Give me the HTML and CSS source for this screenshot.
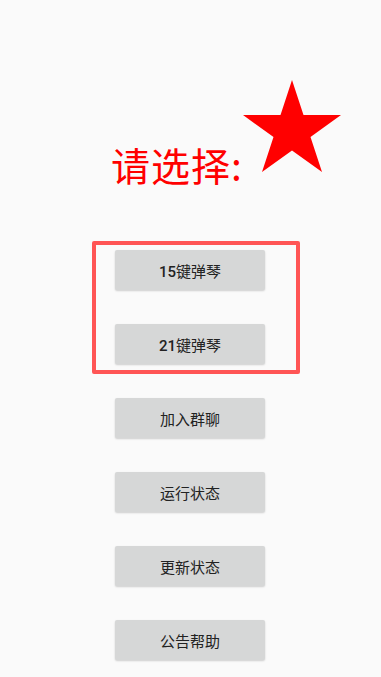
FILE: index.html
```html
<!DOCTYPE html>
<html lang="zh">
<head>
<meta charset="utf-8">
<title>请选择</title>
<link rel="stylesheet" href="styles.css">
</head>
<body>
<div class="page">
  <div class="header">
    <h1 class="title">请选择:</h1>
    <svg class="star" viewBox="243 80 98 92" width="98" height="92" aria-hidden="true">
      <polygon points="292,80 303.5,115 341,115 310.5,137 322,172 292,150.5 262,172 273.5,137 243,115 280.5,115" fill="#ff0000"/>
    </svg>
  </div>
  <div class="menu">
    <div class="group">
      <button class="btn"><span class="num">15</span>键弹琴</button>
      <button class="btn"><span class="num">21</span>键弹琴</button>
    </div>
    <button class="btn btn-out">加入群聊</button>
    <button class="btn btn-out">运行状态</button>
    <button class="btn btn-out">更新状态</button>
    <button class="btn btn-out">公告帮助</button>
  </div>
</div>
</body>
</html>
```

FILE: styles.css
```css
html, body {
  margin: 0;
  padding: 0;
  background: #fafafa;
}
body {
  font-family: Roboto, "Noto Sans CJK SC", sans-serif;
  height: 677px;
  overflow: hidden;
}
.page {
  display: flex;
  flex-direction: column;
}
.header {
  display: flex;
  align-items: flex-start;
  padding: 80px 0 0 111px;
  height: 241px;
  box-sizing: border-box;
}
.title {
  margin: 61px 0 0 0;
  font-size: 39px;
  line-height: 46px;
  font-weight: 400;
  color: #ff0000;
  font-family: "Noto Sans CJK SC", sans-serif;
  letter-spacing: 1px;
  white-space: nowrap;
  width: 132px;
}
.star {
  display: block;
  flex: none;
}
.menu {
  display: flex;
  flex-direction: column;
  align-items: flex-start;
  padding-left: 92px;
  gap: 34px;
}
.group {
  width: 208px;
  height: 133px;
  box-sizing: border-box;
  border: 4px solid #ff5555;
  border-radius: 2px;
  padding: 5px 0 0 19px;
  display: flex;
  flex-direction: column;
  gap: 34px;
  margin-bottom: -10px;
}
.btn {
  width: 150px;
  height: 40px;
  border: none;
  border-radius: 2px;
  background: #d6d7d7;
  box-shadow: 0 1px 2px rgba(0, 0, 0, 0.18);
  font-family: Roboto, "Noto Sans CJK SC", sans-serif;
  font-size: 15px;
  font-weight: 400;
  color: #222222;
  padding: 0;
  flex: none;
}
.num {
  font-weight: 500;
}
.btn-out {
  margin-left: 23px;
}
```
